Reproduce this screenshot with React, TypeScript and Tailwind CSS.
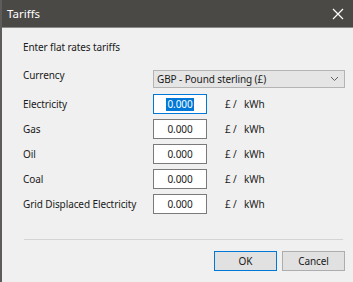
const rows = ["Electricity", "Gas", "Oil", "Coal", "Grid Displaced Electricity"]

export default function App() {
  return (
    <div
      className="w-[353px] h-[282px] flex flex-col bg-[#f0f0f0] border-l-2 border-[#5e5c5a] text-[10px] tracking-[-0.1px] text-[#1a1a1a] overflow-hidden"
      style={{ fontFamily: '"Noto Sans", "Open Sans", sans-serif' }}
    >
      {/* Title bar */}
      <div className="h-[28px] shrink-0 bg-[#4b4946] border-b border-[#8c8a88] flex items-center justify-between pl-[7px] pr-[9px] -ml-[2px]">
        <span className="text-white text-[11.5px] tracking-normal">Tariffs</span>
        <svg width="12" height="12" viewBox="0 0 12 12" className="text-white">
          <path d="M1 1 L11 11 M11 1 L1 11" stroke="currentColor" strokeWidth="1.2" />
        </svg>
      </div>

      <div className="flex flex-col pl-[21px] pr-[8px] whitespace-nowrap">
        <div className="mt-[11px] h-[16px] leading-[16px]">Enter flat rates tariffs</div>

        {/* Currency */}
        <div className="mt-[15px] flex items-start h-[18px]">
          <div className="w-[130px] leading-[12px] mt-[-1px]">Currency</div>
          <div className="w-[192px] h-[18px] bg-[#e5e5e5] border border-[#b4b4b4] flex items-center justify-between pl-[3px] pr-[5px]">
            <span className="leading-[16px]">GBP - Pound sterling (£)</span>
            <svg width="9" height="6" viewBox="0 0 9 6">
              <path d="M1 1 L4.5 4.5 L8 1" fill="none" stroke="#606060" strokeWidth="1" />
            </svg>
          </div>
        </div>

        {/* Tariff inputs */}
        <div className="mt-[6px] flex flex-col gap-[5px]">
          {rows.map((name, i) => (
            <div key={name} className="flex items-center h-[20px]">
              <div className="w-[130px]">{name}</div>
              <div
                className={`w-[54px] h-[20px] bg-white border flex items-center justify-center ${
                  i === 0 ? "border-[#0078d7]" : "border-[#7a7a7a]"
                }`}
              >
                {i === 0 ? (
                  <span className="bg-[#0078d7] text-white leading-[13px] px-[1px]">0.000</span>
                ) : (
                  <span>0.000</span>
                )}
              </div>
              <div className="ml-[18px] flex">
                <span className="w-[19px]">£ /</span>
                <span>kWh</span>
              </div>
            </div>
          ))}
        </div>

        {/* Separator */}
        <div className="mt-[25px] ml-[1px] w-[319px] h-px bg-[#d4d4d4]" />

        {/* Buttons */}
        <div className="mt-[11px] flex justify-end gap-[5px]">
          <button className="w-[63px] h-[20px] bg-[#e1e1e1] border border-[#0078d7] leading-[16px]">OK</button>
          <button className="w-[63px] h-[20px] bg-[#e1e1e1] border border-[#adadad] leading-[16px]">Cancel</button>
        </div>
      </div>
    </div>
  )
}
